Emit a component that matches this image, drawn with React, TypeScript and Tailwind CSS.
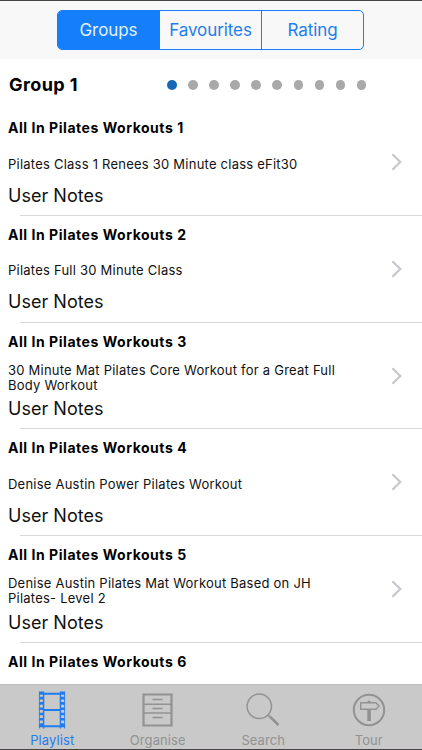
import React, { useState } from 'react';
import clsx from 'clsx';

interface IWorkout {
    title: string;
    description?: string;
}

const SEGMENTS = ['Groups', 'Favourites', 'Rating'];
const NO_OF_GROUPS = 10;

const WORKOUTS: IWorkout[] = [
    {
        title: 'All In Pilates Workouts 1',
        description: 'Pilates Class 1 Renees 30 Minute class eFit30',
    },
    {
        title: 'All In Pilates Workouts 2',
        description: 'Pilates Full 30 Minute Class',
    },
    {
        title: 'All In Pilates Workouts 3',
        description: '30 Minute Mat Pilates Core Workout for a Great Full Body Workout',
    },
    {
        title: 'All In Pilates Workouts 4',
        description: 'Denise Austin Power Pilates Workout',
    },
    {
        title: 'All In Pilates Workouts 5',
        description: 'Denise Austin Pilates Mat Workout Based on JH Pilates- Level 2',
    },
    {
        title: 'All In Pilates Workouts 6',
    },
];

function FilmIcon() {
    return (
        <svg width="28" height="38" viewBox="0 0 28 38" fill="none" stroke="currentColor">
            <path d="M1.4 0.5v37M26.6 0.5v37" strokeWidth="0.9" />
            <path d="M3.2 0.5v37M24.8 0.5v37" strokeWidth="3.6" strokeDasharray="2.6 2.7" />
            <path d="M5.6 0.5v37M22.4 0.5v37" strokeWidth="1.4" />
            <path d="M1 2.8h26M5 19h18M1 35.2h26" strokeWidth="2" />
        </svg>
    );
}

function DrawersIcon() {
    return (
        <svg width="31" height="34" viewBox="0 0 31 34" fill="none" stroke="currentColor">
            <path d="M1.5 1.5h28v31h-28z" strokeWidth="2.2" />
            <path d="M2 11.2h27M2 20h27" strokeWidth="1.6" />
            <path d="M10.5 6.5h10M10.5 15.5h10M10.5 24.5h10" strokeWidth="1.6" />
        </svg>
    );
}

function SearchIcon() {
    return (
        <svg width="34" height="34" viewBox="0 0 34 34" fill="none" stroke="currentColor">
            <circle cx="13.3" cy="13.3" r="12.2" strokeWidth="1.5" />
            <path d="M22 22l2 2" strokeWidth="1.6" />
            <path d="M23.6 23.4l8.9 8.6" strokeWidth="2.6" />
        </svg>
    );
}

function SignpostIcon() {
    return (
        <svg width="34" height="34" viewBox="0 0 34 34" fill="none" stroke="currentColor">
            <circle cx="17" cy="17" r="15.2" strokeWidth="2" />
            <path d="M8.7 9.7h15.2l3.2 3.3-3.2 3.3H8.7z" strokeWidth="1.4" />
            <path d="M15.3 9.4a1.8 1.8 0 0 1 3.6 0zM15.3 16.5h3.6v11.4h-3.6z" fill="currentColor" stroke="none" />
        </svg>
    );
}

const TABS = [
    { label: 'Playlist', icon: <FilmIcon /> },
    { label: 'Organise', icon: <DrawersIcon /> },
    { label: 'Search', icon: <SearchIcon /> },
    { label: 'Tour', icon: <SignpostIcon /> },
];

function WorkoutRow({ workout }: { workout: IWorkout }) {
    return (
        <div className="flex flex-none flex-col">
            <h2 className="pl-2 pt-2.5 text-[14px] font-bold leading-[18px] tracking-[0.54px]">
                {workout.title}
            </h2>
            {workout.description && (
                <>
                    <div className="flex h-[77.75px]">
                        <div className="w-[360px] pl-2 pt-2.5">
                            <div className="flex h-[34px] items-center">
                                <p className="w-[340px] text-[13px] leading-[15px] tracking-[0.23px] text-[#111]">
                                    {workout.description}
                                </p>
                            </div>
                            <p className="mt-[3.5px] text-[18px] leading-[22px] tracking-[0.02px] text-[#111]">
                                User Notes
                            </p>
                        </div>
                        <svg
                            className="ml-[31px] mt-4"
                            width="12"
                            height="18"
                            viewBox="0 0 12 18"
                            fill="none"
                            stroke="#c7c7cc"
                            strokeWidth="2.2"
                        >
                            <path d="M1.4 1.3L9.3 9l-7.9 7.7" />
                        </svg>
                    </div>
                    <div className="ml-5 h-px bg-[#d7d7d9]" />
                </>
            )}
        </div>
    );
}

function App() {
    const [segment, setSegment] = useState('Groups');
    const [tab, setTab] = useState('Playlist');

    return (
        <div className="flex h-[750px] w-[422px] flex-col overflow-hidden border-y border-[#454345] bg-white font-['Inter',sans-serif] text-black">
            <header className="flex h-[58px] flex-none justify-center bg-[#f8f8f8] pt-[9px]">
                <div className="ml-[-1px] flex h-10 w-[307px] overflow-hidden rounded-[5px] border border-[#147efb]">
                    {SEGMENTS.map((name) => (
                        <button
                            key={name}
                            onClick={() => setSegment(name)}
                            className={clsx(
                                'flex-1 border-r border-[#147efb] pt-0.5 text-[17px] tracking-[-0.08px] last:border-r-0',
                                segment === name
                                    ? 'bg-[#147efb] text-[#e4f1ff]'
                                    : 'text-[#1e7eed]'
                            )}
                        >
                            {name}
                        </button>
                    ))}
                </div>
            </header>

            <div className="flex h-[50px] flex-none items-center pl-[9px] pt-[2px]">
                <h1 className="w-[158px] text-[18px] font-bold leading-6 tracking-[0.4px]">
                    Group 1
                </h1>
                <div className="flex gap-[11.6px]">
                    {Array.from({ length: NO_OF_GROUPS }, (_, i) => (
                        <span
                            key={i}
                            className={clsx(
                                'size-[9.5px] rounded-full',
                                i === 0 ? 'bg-[#1669b5]' : 'bg-[#a9a9a9]'
                            )}
                        />
                    ))}
                </div>
            </div>

            <main className="flex min-h-0 flex-1 flex-col overflow-hidden">
                {WORKOUTS.map((workout) => (
                    <WorkoutRow key={workout.title} workout={workout} />
                ))}
            </main>

            <nav className="grid h-[65px] flex-none grid-cols-4 border-t border-[#bdbdbd] bg-[#c9c9c9]">
                {TABS.map(({ label, icon }) => (
                    <button
                        key={label}
                        onClick={() => setTab(label)}
                        className={clsx(
                            'flex flex-col items-center pr-px pt-[5px]',
                            tab === label ? 'text-[#1f7df0]' : 'text-[#929292]'
                        )}
                    >
                        <span className="flex h-[40px] items-center">{icon}</span>
                        <span className="mt-0.5 text-[13px] leading-4 tracking-[0.1px]">
                            {label}
                        </span>
                    </button>
                ))}
            </nav>
        </div>
    );
}

export default App;
